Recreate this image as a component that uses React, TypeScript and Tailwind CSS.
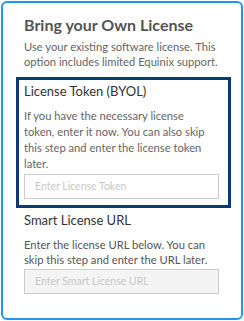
export default function App() {
  return (
    <div className="p-px" style={{ fontFamily: "Lato, 'Open Sans', sans-serif" }}>
      <div className="w-[242px] h-[319px] rounded-[6px] border-2 border-[#2196f3] bg-white pl-[13px] pt-[12px]">
        {/* intro */}
        <div className="pl-[8px]">
          <h2 className="text-[16px] font-bold leading-[20px] text-[#555]">Bring your Own License</h2>
          <p className="mt-[4px] w-[200px] text-[11.2px] leading-[15px] text-[#666]">
            Use your existing software license. This option includes limited Equinix support.
          </p>
        </div>

        {/* selected option */}
        <div className="mt-[8px] w-[215px] border-[3px] border-[#0b3a75] px-[5px] pt-[2px] pb-[6px]">
          <div className="text-[13px] leading-[18px] text-[#333]">License Token (BYOL)</div>
          <p className="mt-[8px] w-[186px] text-[11.2px] leading-[16px] text-[#666]">
            If you have the necessary license token, enter it now. You can also skip this step and enter the license token later.
          </p>
          <input
            className="mt-[1px] h-[25px] w-[195px] border border-[#ccc] bg-white px-[10px] text-[10.5px] text-[#333] placeholder:text-[#c8c8c8] outline-none"
            placeholder="Enter License Token"
          />
        </div>

        {/* smart license */}
        <div className="pl-[8px]">
          <div className="mt-[3px] text-[13px] leading-[18px] text-[#333]">Smart License URL</div>
          <p className="mt-[8px] w-[186px] text-[11.2px] leading-[15px] text-[#555]">
            Enter the license URL below. You can skip this step and enter the URL later.
          </p>
          <input
            disabled
            className="mt-[2px] h-[25px] w-[195px] border border-[#ccc] bg-[#f4f4f4] px-[10px] text-[10.5px] placeholder:text-[#c8c8c8] outline-none"
            placeholder="Enter Smart License URL"
          />
        </div>
      </div>
    </div>
  );
}
